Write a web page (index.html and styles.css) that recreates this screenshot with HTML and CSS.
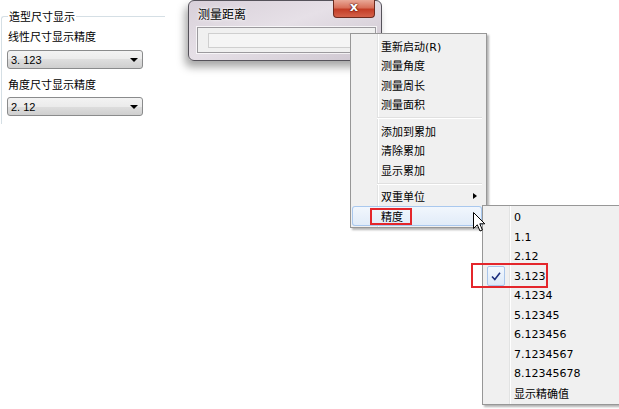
FILE: index.html
```html
<!DOCTYPE html>
<html>
<head>
  <title>测量距离</title>
  <link rel="stylesheet" href="styles.css">
</head>
<body>
  <!-- left settings panel -->
  <fieldset class="group">
    <legend>造型尺寸显示</legend>
    <div class="field-label">线性尺寸显示精度</div>
    <div class="combo">3. 123<span class="combo-arrow"></span></div>
    <div class="field-label second">角度尺寸显示精度</div>
    <div class="combo tight">2. 12<span class="combo-arrow"></span></div>
  </fieldset>

  <!-- measure dialog -->
  <div class="dialog">
    <div class="dialog-bar">
      <span class="dialog-title">测量距离</span>
      <span class="dialog-close">x</span>
    </div>
    <div class="dialog-client">
      <div class="dialog-input"></div>
    </div>
  </div>

  <!-- context menu -->
  <div class="menu main-menu">
    <div class="menu-item">重新启动(R)</div>
    <div class="menu-item">测量角度</div>
    <div class="menu-item">测量周长</div>
    <div class="menu-item">测量面积</div>
    <div class="menu-sep"></div>
    <div class="menu-item">添加到累加</div>
    <div class="menu-item">清除累加</div>
    <div class="menu-item">显示累加</div>
    <div class="menu-sep"></div>
    <div class="menu-item has-sub">双重单位</div>
    <div class="menu-item has-sub active">精度</div>
  </div>

  <div class="menu sub-menu">
    <div class="menu-item">0</div>
    <div class="menu-item">1.1</div>
    <div class="menu-item">2.12</div>
    <div class="menu-item"><span class="check"><svg width="10" height="9" viewBox="0 0 10 9"><path d="M1 4.5 L3.8 7.5 L9 0.8" fill="none" stroke="#1b2d7d" stroke-width="1.6"/></svg></span>3.123</div>
    <div class="menu-item">4.1234</div>
    <div class="menu-item">5.12345</div>
    <div class="menu-item">6.123456</div>
    <div class="menu-item">7.1234567</div>
    <div class="menu-item">8.12345678</div>
    <div class="menu-item">显示精确值</div>
  </div>

  <!-- annotations -->
  <div class="mark mark-precision"></div>
  <div class="mark mark-value"></div>

  <svg class="cursor" width="13" height="21" viewBox="0 0 13 21">
    <path d="M0.5 0.5 L0.5 16.5 L4.3 12.8 L7 19 L9.4 18 L6.8 11.8 L11.8 11.8 Z" fill="#fff" stroke="#000" stroke-width="1" stroke-linejoin="round"/>
  </svg>
</body>
</html>
```

FILE: styles.css
```css
body {
  margin: 0;
  width: 619px;
  height: 409px;
  position: relative;
  overflow: hidden;
  background: #fff;
  font: 11px "Noto Sans CJK SC", sans-serif;
  color: #000;
}

/* left panel */
.group {
  margin: 9px 0 0 1px;
  width: 164px;
  box-sizing: border-box;
  min-width: 0;
  border: 1px solid #d5dfe5;
  border-right: none;
  border-bottom: none;
  border-top-left-radius: 3px;
  padding: 0 0 8px 6px;
}

.group legend {
  padding: 0 1px;
  line-height: 14px;
}

.field-label {
  line-height: 15px;
  margin-top: 6px;
}

.field-label.second {
  margin-top: 8px;
}

.combo {
  margin: 6px 0 0 -1px;
  width: 136px;
  height: 19px;
  box-sizing: border-box;
  border: 1px solid #8a8b8c;
  border-radius: 3px;
  background: linear-gradient(#f3f3f3 0%, #ebebeb 50%, #dedede 50%, #cfcfcf 100%);
  padding-left: 3px;
  display: flex;
  align-items: center;
  font-family: "Liberation Sans", sans-serif;
  font-size: 11px;
}

.combo.tight {
  margin-top: 5px;
}

.combo-arrow {
  margin-left: auto;
  margin-right: 4px;
  width: 0;
  height: 0;
  border-left: 4px solid transparent;
  border-right: 4px solid transparent;
  border-top: 4px solid #000;
}

/* dialog window */
.dialog {
  position: absolute;
  left: 188px;
  top: 0;
  width: 194px;
  height: 61px;
  box-sizing: border-box;
  border: 1px solid #55525a;
  border-radius: 6px;
  background: linear-gradient(160deg, #d8d0d9 0%, #e6e0e7 45%, #cdc5cf 100%);
  box-shadow: -3px 6px 8px rgba(0,0,0,0.35);
  padding: 0 5px 7px 8px;
}

.dialog-bar {
  height: 26px;
  display: flex;
  margin-left: -8px;
  margin-right: -5px;
}

.dialog-title {
  margin: 6px 0 0 9px;
  line-height: 14px;
  font-size: 12px;
  text-shadow: 0 0 4px #fff, 0 0 2px #fff;
}

.dialog-close {
  margin: -1px 6px 0 auto;
  width: 42px;
  height: 18px;
  box-sizing: border-box;
  border: 1px solid #6d2a1e;
  border-top: none;
  border-radius: 0 0 4px 4px;
  background: linear-gradient(#e9a897 0%, #d8705a 45%, #c33d26 55%, #d4614a 100%);
  color: #fff;
  font: bold 13px "DejaVu Sans", sans-serif;
  line-height: 14px;
  text-align: center;
  text-shadow: 0 0 2px #400, 0 0 1px #400;
}

.dialog-client {
  height: 26px;
  box-sizing: border-box;
  border: 1px solid #9c9a9e;
  box-shadow: 0 0 0 1px rgba(255,255,255,0.7);
  background: #f0f0f0;
  padding: 5px 0 0 10px;
}

.dialog-input {
  width: 160px;
  height: 15px;
  box-sizing: border-box;
  border: 1px solid #cfcfcf;
  background: #f5f5f5;
}

/* menus */
.menu {
  position: absolute;
  box-sizing: border-box;
  border: 1px solid #979797;
  background: linear-gradient(to right, transparent 26px, #e2e3e3 26px, #e2e3e3 27px, #fff 27px, #fff 28px, transparent 28px), #f0f0f0;
  box-shadow: 2px 2px 2px rgba(0,0,0,0.3);
  font: 11px "DejaVu Sans", "Noto Sans CJK SC", sans-serif;
}

.main-menu {
  left: 350px;
  top: 33px;
  width: 137px;
  padding: 2px 4px 1px 1px;
}

.sub-menu {
  left: 482px;
  top: 205px;
  width: 150px;
  padding: 2px 0 1px 1px;
}

.menu-item {
  height: 19.5px;
  display: flex;
  align-items: center;
  padding-left: 29px;
}

.sub-menu .menu-item {
  padding-left: 30px;
}

.menu-item.has-sub::after {
  content: "";
  margin-left: auto;
  margin-right: 5px;
  border-top: 3.5px solid transparent;
  border-bottom: 3.5px solid transparent;
  border-left: 4px solid #000;
}

.menu-item.active {
  border-radius: 3px;
  background: linear-gradient(#f2f7fd, #e0ebf8);
  box-shadow: inset 0 0 0 1px #a9c8ee;
}

.menu-sep {
  margin: 3px 0 2px 25px;
  border-top: 1px solid #e0e0e0;
  border-bottom: 1px solid #fff;
}

.check {
  margin: 0 9px 0 -27px;
  width: 18px;
  height: 20px;
  box-sizing: border-box;
  border: 1px solid #a9c5ea;
  border-radius: 2px;
  background: linear-gradient(#f3f8fe, #dde9f8);
  display: flex;
  align-items: center;
  justify-content: center;
}

/* red annotation boxes */
.mark {
  position: absolute;
  box-sizing: border-box;
  border: 2px solid #e4262b;
}

.mark-precision {
  left: 370px;
  top: 208px;
  width: 42px;
  height: 17px;
}

.mark-value {
  left: 471px;
  top: 263px;
  width: 77px;
  height: 25px;
}

.cursor {
  position: absolute;
  left: 473px;
  top: 212px;
}
```
